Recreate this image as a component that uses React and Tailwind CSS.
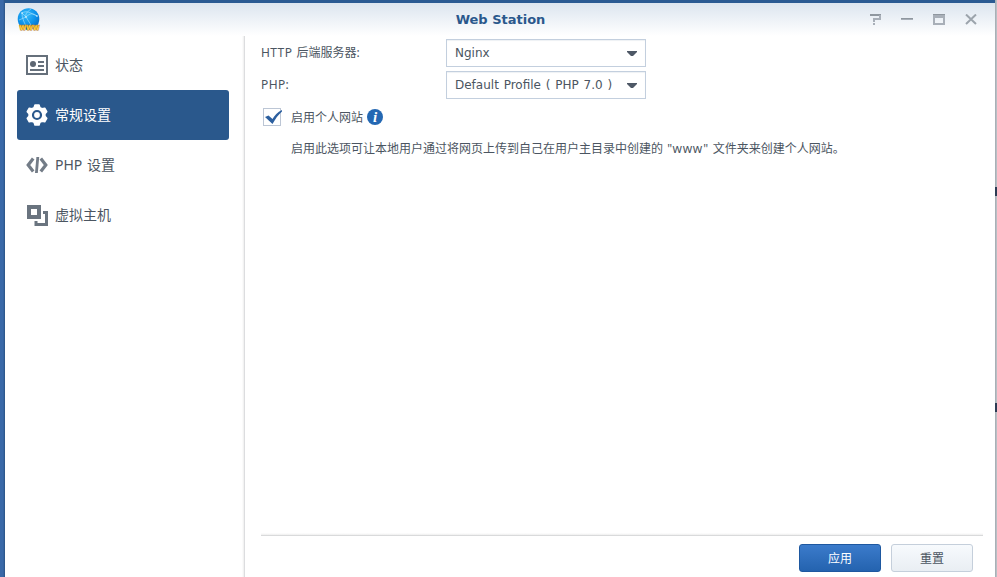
import { useState } from 'react';
import clsx from 'clsx';

const StatusIcon = () => (
    <svg width="22" height="20" viewBox="0 0 22 20" fill="none" stroke="#66707b" strokeWidth="2">
        <rect x="1" y="1" width="20" height="18" />
        <circle cx="7" cy="9" r="3" fill="#5d6672" stroke="none" />
        <path d="M12 7h6M12 11h6M4 15h14" />
    </svg>
);

const GearIcon = () => (
    <svg width="22" height="22" viewBox="0 0 22 22">
        <path
            d="M9 1h4l0.8 2.6 2.2 1.2 2.7-0.6 2 3.5-1.8 2v2.6l1.8 2-2 3.5-2.7-0.6-2.2 1.2L13 21H9l-0.8-2.6L6 17.2l-2.7 0.6-2-3.5 1.8-2V9.7l-1.8-2 2-3.5L6 4.8l2.2-1.2z"
            fill="#fff"
            stroke="#fff"
            strokeWidth="1.6"
            strokeLinejoin="round"
        />
        <circle cx="11" cy="11" r="4" fill="#fff" stroke="#2a588c" strokeWidth="2.2" />
    </svg>
);

const CodeIcon = () => (
    <svg width="22" height="16" viewBox="0 0 22 16" fill="none" stroke="#737c87">
        <path d="M7.2 1.5 2.2 8l5 6.5M14.8 1.5l5 6.5-5 6.5" strokeWidth="3.2" />
        <path d="M11.8 0 10.4 16" strokeWidth="2.8" />
    </svg>
);

const HostIcon = () => (
    <svg width="22" height="21" viewBox="0 0 22 21" fill="none" stroke="#6a747f">
        <path d="M3 2h10v10H3z" strokeWidth="4" />
        <path d="M17 7.5h3.5v12H10v-3.5" strokeWidth="3" />
    </svg>
);

const AppLogo = () => (
    <svg width="24" height="24" viewBox="0 0 24 24" className="overflow-visible">
        <defs>
            <radialGradient id="globe" cx="0.4" cy="0.3" r="0.75">
                <stop offset="0" stopColor="#38bdfa" />
                <stop offset="0.6" stopColor="#0b91ea" />
                <stop offset="1" stopColor="#0868c4" />
            </radialGradient>
        </defs>
        <circle cx="11.5" cy="11" r="10.8" fill="url(#globe)" />
        <g fill="none" stroke="#a9e3ff" strokeWidth="0.6">
            <path d="M5 5c5-3 8 0 15 3M5 5c0 5 2 9 4 13M9 9c4-4 7-4 11-1M2 12l7-3 5 8M5 5l4 4M14 1c-4 3-6 5-5 8" />
        </g>
        <g fill="#e5f8ff">
            <circle cx="5" cy="5" r="0.8" />
            <circle cx="9" cy="9" r="0.8" />
            <circle cx="20" cy="8" r="0.8" />
        </g>
        <text
            x="12.5"
            y="21.5"
            textAnchor="middle"
            textLength="20"
            lengthAdjust="spacingAndGlyphs"
            fontFamily="DejaVu Sans"
            fontWeight="bold"
            fontSize="6.5"
            fill="#ffd040"
            stroke="#b87818"
            strokeWidth="1"
            paintOrder="stroke"
        >
            WWW
        </text>
    </svg>
);

const WindowControls = () => (
    <svg width="110" height="12" viewBox="0 0 110 12" fill="none" stroke="#a8afb8" shapeRendering="crispEdges">
        <path d="M0 1h11" stroke="#8f979f" strokeWidth="2" />
        <path d="M10 1v5M11 5H4M4 4v4" strokeWidth="2" />
        <path d="M3 10h2" strokeWidth="2" />
        <path d="M31 5h12" strokeWidth="2" />
        <path d="M31 4.5h12" stroke="#8f979f" />
        <path d="M64 1v9h10V1" strokeWidth="2" />
        <path d="M63 2h12" strokeWidth="4" />
        <path d="M63 0.5h12" stroke="#8f979f" />
        <path d="m96 0.5 10 9.5M106 0.5l-10 9.5" stroke="#9ca4ac" strokeWidth="2" shapeRendering="auto" />
    </svg>
);

const InfoIcon = () => (
    <svg width="16" height="16" viewBox="0 0 16 16">
        <circle cx="8" cy="8" r="8" fill="#2468b3" />
        <text x="8" y="12.8" textAnchor="middle" fontFamily="Liberation Serif" fontSize="15" fontWeight="bold" fontStyle="italic" fill="#fff">
            i
        </text>
    </svg>
);

const menu = [
    { id: 'status', label: '状态', icon: StatusIcon },
    { id: 'general', label: '常规设置', icon: GearIcon },
    { id: 'php', label: 'PHP 设置', icon: CodeIcon },
    { id: 'host', label: '虚拟主机', icon: HostIcon },
];

const SelectBox = ({ value }) => (
    <button className='flex h-7 w-[200px] items-center justify-between border border-[#c3cfde] bg-white px-2 text-left font-["DejaVu_Sans",sans-serif] text-[12px] shadow-[inset_0_1px_1px_#eef1f4]'>
        <span className="whitespace-pre [word-spacing:1px]">{value}</span>
        <svg width="10" height="5" viewBox="0 0 10 5" className="mt-px shrink-0">
            <path d="M0 0h10v1L6 5H4L0 1z" fill="#4e5866" />
        </svg>
    </button>
);

const App = () => {
    const [active, setActive] = useState('general');
    const [enabled, setEnabled] = useState(true);

    return (
        <div className="flex h-[577px] w-[997px] overflow-hidden bg-[#2a5a92] pt-[3px] font-['Noto_Sans','Noto_Sans_CJK_SC',sans-serif] text-[12px] text-[#4b5561]">
            <div className="-mt-[3px] w-[5px] shrink-0 bg-linear-to-r from-[#3a69a8] from-60% to-[#2a5385]" />
            <div className="flex w-[990px] shrink-0 flex-col bg-white">
                <header className="flex h-[33px] shrink-0 items-center justify-between bg-linear-to-b from-[#dce5ef] to-white pl-3 pr-[15px]">
                    <div className="flex w-[110px]">
                        <AppLogo />
                    </div>
                    <h1 className='pl-1 font-["DejaVu_Sans",sans-serif] text-[13px] font-bold text-[#2a588c]'>Web Station</h1>
                    <WindowControls />
                </header>

                <div className="flex min-h-0 flex-1">
                    <nav className="w-[240px] shrink-0 border-r border-[#dcdddf] pl-3 pt-1 shadow-[inset_-3px_0_2px_-2px_#eee]">
                        {menu.map(({ id, label, icon: Icon }) => (
                            <button
                                key={id}
                                onClick={() => setActive(id)}
                                className={clsx(
                                    'flex h-[50px] w-[212px] items-center rounded-[3px] pl-[9px] text-[14px]',
                                    active === id && 'bg-[#2a588c] text-white'
                                )}
                            >
                                <span className="flex w-[29px]">
                                    <Icon />
                                </span>
                                <span className="pb-0.5 [word-spacing:1px]">{label}</span>
                            </button>
                        ))}
                    </nav>

                    <main className="flex flex-1 flex-col pl-4 pr-3">
                        <div className="flex-1 pt-[3px]">
                            <div className="flex h-8 items-start">
                                <label className="w-[185px] leading-7 [word-spacing:1px]">
                                    <span className="tracking-[0.4px]">HTTP</span> 后端服务器:
                                </label>
                                <SelectBox value="Nginx" />
                            </div>
                            <div className="flex h-8 items-start">
                                <label className="w-[185px] leading-7 tracking-[0.4px]">PHP:</label>
                                <SelectBox value="Default Profile ( PHP 7.0 )" />
                            </div>
                            <div className="flex h-7 items-center">
                                <button onClick={() => setEnabled(!enabled)} className="mb-px ml-0.5 flex h-[18px] w-[18px] shrink-0 border border-[#bcc6d5]">
                                    {enabled && (
                                        <svg width="18" height="16" viewBox="0 0 18 16" className="shrink-0">
                                            <path d="M1 8 4.5 6.5l4 3.5c2-3.5 5-7 9.5-9l.7.8C14.500 5.200 11.500 9.500 8.500 15z" fill="#2c5f9f" />
                                        </svg>
                                    )}
                                </button>
                                <span className="ml-[10px] mr-1 pt-px">启用个人网站</span>
                                <InfoIcon />
                            </div>
                            <p className="ml-[30px] mt-1 whitespace-nowrap leading-7 [word-spacing:1px]">
                                启用此选项可让本地用户通过将网页上传到自己在用户主目录中创建的 <span className="tracking-[0.6px]">"www"</span> 文件夹来创建个人网站。
                            </p>
                        </div>

                        <div className="h-0.5 shrink-0 bg-linear-to-b from-white to-[#eee]" />
                        <footer className="flex h-[42px] shrink-0 justify-end gap-[10px] border-t border-[#d9dadb] pr-[10px] pt-2">
                            <button className="h-7 w-[82px] rounded-[3px] border border-[#1e58a0] bg-linear-to-b from-[#3b7bcb] to-[#2463af] pt-0.5 text-white">
                                应用
                            </button>
                            <button className="h-7 w-[82px] rounded-[3px] border border-[#c5cfdb] bg-linear-to-b from-[#f7fafd] to-[#e9eef3] pt-0.5">
                                重置
                            </button>
                        </footer>
                    </main>
                </div>
            </div>
            <div className="-mt-[3px] flex w-0.5 shrink-0 flex-col bg-linear-to-r from-[#a1a8af] to-[#c1c7cc] pt-[187px]">
                <div className="h-[9px] bg-[#2c3c54]" />
                <div className="mt-[207px] h-[9px] bg-[#2c3c54]" />
            </div>
        </div>
    );
};

export default App;
